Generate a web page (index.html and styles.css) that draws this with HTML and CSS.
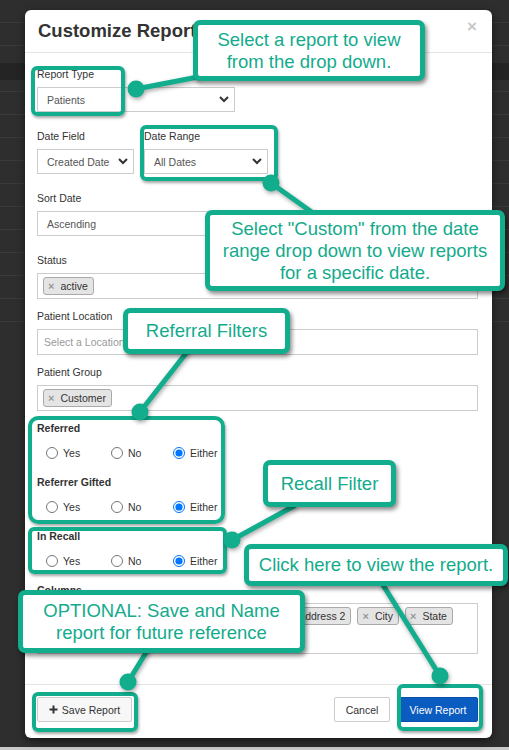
FILE: index.html
```html
<!DOCTYPE html>
<html lang="en">
<head>
<meta charset="utf-8">
<title>Customize Report</title>
<link rel="stylesheet" href="styles.css">
</head>
<body>
<div class="modal">
  <div class="modal-header">
    <h4 class="modal-title">Customize Report</h4>
    <span class="close">&times;</span>
  </div>
  <div class="modal-body">
    <div class="group g1">
      <label class="label">Report Type</label>
      <div class="select w-report"><span>Patients</span><svg class="chev" width="10" height="7" viewBox="0 0 10 7"><polyline points="1,1 5,5 9,1"/></svg></div>
    </div>
    <div class="row g1">
      <div class="group">
        <label class="label">Date Field</label>
        <div class="select w-field"><span>Created Date</span><svg class="chev" width="10" height="7" viewBox="0 0 10 7"><polyline points="1,1 5,5 9,1"/></svg></div>
      </div>
      <div class="group">
        <label class="label">Date Range</label>
        <div class="select w-range"><span>All Dates</span><svg class="chev" width="10" height="7" viewBox="0 0 10 7"><polyline points="1,1 5,5 9,1"/></svg></div>
      </div>
    </div>
    <div class="group g1">
      <label class="label">Sort Date</label>
      <div class="select"><span>Ascending</span><svg class="chev" width="10" height="7" viewBox="0 0 10 7"><polyline points="1,1 5,5 9,1"/></svg></div>
    </div>
    <div class="group g2">
      <label class="label">Status</label>
      <div class="tagbox"><span class="tag"><b class="x">&times;</b>active</span></div>
    </div>
    <div class="group g2">
      <label class="label">Patient Location</label>
      <div class="input placeholder">Select a Location</div>
    </div>
    <div class="group g2">
      <label class="label">Patient Group</label>
      <div class="tagbox"><span class="tag"><b class="x">&times;</b>Customer</span></div>
    </div>
    <div class="rgroup">
      <div class="rlabel">Referred</div>
      <div class="radios">
        <label class="radio r1"><input type="radio" name="ref">Yes</label>
        <label class="radio r2"><input type="radio" name="ref">No</label>
        <label class="radio"><input type="radio" name="ref" checked>Either</label>
      </div>
    </div>
    <div class="rgroup">
      <div class="rlabel">Referrer Gifted</div>
      <div class="radios">
        <label class="radio r1"><input type="radio" name="gift">Yes</label>
        <label class="radio r2"><input type="radio" name="gift">No</label>
        <label class="radio"><input type="radio" name="gift" checked>Either</label>
      </div>
    </div>
    <div class="rgroup">
      <div class="rlabel">In Recall</div>
      <div class="radios">
        <label class="radio r1"><input type="radio" name="recall">Yes</label>
        <label class="radio r2"><input type="radio" name="recall">No</label>
        <label class="radio"><input type="radio" name="recall" checked>Either</label>
      </div>
    </div>
    <div class="group">
      <label class="label rlabel">Columns</label>
      <div class="tagbox cols">
        <span class="tag"><b class="x">&times;</b>First Name</span>
        <span class="tag"><b class="x">&times;</b>Last Name</span>
        <span class="tag"><b class="x">&times;</b>Address 1</span>
        <span class="tag"><b class="x">&times;</b>Address 2</span>
        <span class="tag"><b class="x">&times;</b>City</span>
        <span class="tag"><b class="x">&times;</b>State</span>
      </div>
    </div>
  </div>
  <div class="modal-footer">
    <button class="btn btn-save"><svg class="plus" width="9" height="9" viewBox="0 0 9 9"><path d="M4.5 0.5v8M0.5 4.5h8"/></svg>Save Report</button>
    <div class="right-btns">
      <button class="btn btn-cancel">Cancel</button>
      <button class="btn btn-primary">View Report</button>
    </div>
  </div>
</div>

<div class="overlay">
  <div class="hl hl-type"></div>
  <div class="hl hl-range"></div>
  <div class="hl hl-referral"></div>
  <div class="hl hl-recall"></div>
  <div class="hl hl-save"></div>
  <div class="hl hl-view"></div>
  <svg class="connectors" width="509" height="750" viewBox="0 0 509 750">
    <g class="lines">
      <line x1="136" y1="89" x2="198" y2="77"/>
      <line x1="271" y1="183" x2="313" y2="213"/>
      <line x1="187" y1="352" x2="140" y2="412"/>
      <line x1="232" y1="540" x2="294" y2="506"/>
      <line x1="383" y1="585" x2="440" y2="676"/>
      <line x1="147" y1="651" x2="128" y2="682"/>
    </g>
    <g class="dots">
      <circle cx="136" cy="89" r="8.5"/>
      <circle cx="271" cy="183" r="8.5"/>
      <circle cx="140" cy="412" r="8.5"/>
      <circle cx="232" cy="540" r="8.5"/>
      <circle cx="440" cy="676" r="8.5"/>
      <circle cx="128" cy="682" r="8.5"/>
    </g>
  </svg>
  <div class="callout c1">Select a report to view<br>from the drop down.</div>
  <div class="callout c2">Select "Custom" from the date<br>range drop down to view reports<br>for a specific date.</div>
  <div class="callout c3">Referral Filters</div>
  <div class="callout c4">Recall Filter</div>
  <div class="callout c5">Click here to view the report.</div>
  <div class="callout c6">OPTIONAL: Save and Name<br>report for future reference</div>
</div>
</body>
</html>
```
FILE: styles.css
```css
* { box-sizing: border-box; }

html, body {
  margin: 0;
  height: 750px;
}

body {
  position: relative;
  overflow: hidden;
  font-family: "Liberation Sans", Arial, sans-serif;
  font-size: 10.5px;
  color: #333;
  background:
    linear-gradient(#c9c9c9, #c9c9c9) 0 747px / 100% 3px no-repeat,
    linear-gradient(#242424, #242424) 0 63px / 100% 17px no-repeat,
    repeating-linear-gradient(to bottom, transparent 0 22px, #3a3a3a 22px 23px) 0 0 / 100% 330px no-repeat,
    #2e2e2e;
}

/* ---------- modal ---------- */
.modal {
  margin: 10px 0 0 25px;
  width: 467px;
  background: #fff;
  border-radius: 6px;
  box-shadow: 0 3px 9px rgba(0, 0, 0, 0.5);
}

.modal-header {
  height: 43px;
  border-bottom: 1px solid #e5e5e5;
  display: flex;
  justify-content: space-between;
  align-items: center;
  padding: 0 15px 0 13px;
}

.modal-title {
  margin: 0;
  font-size: 18.5px;
  font-weight: bold;
  color: #333;
  line-height: 1;
}

.close {
  align-self: flex-start;
  margin-top: 8px;
  font-size: 17px;
  line-height: 17px;
  font-weight: bold;
  color: #c8c8c8;
}

.modal-body {
  padding: 14px 14px 30px 12px;
}

.label {
  display: block;
  line-height: 14px;
  margin-bottom: 6px;
}

.g1 { margin-bottom: 17px; }
.g2 { margin-bottom: 10px; }

.row {
  display: flex;
  gap: 10px;
}

.select {
  height: 25px;
  border: 1px solid #ccc;
  display: flex;
  align-items: center;
  justify-content: space-between;
  padding: 0 5px 0 9px;
  color: #555;
}

.w-report { width: 198px; }
.w-field { width: 97px; }
.w-range { width: 124px; }

.chev polyline {
  fill: none;
  stroke: #333;
  stroke-width: 2;
}

.input {
  height: 26px;
  border: 1px solid #ccc;
  display: flex;
  align-items: center;
  padding: 0 6px;
}

.placeholder { color: #999; }

.tagbox {
  min-height: 26px;
  border: 1px solid #ccc;
  padding: 3px 5px;
  display: flex;
  flex-wrap: wrap;
  align-content: flex-start;
  gap: 4px 6px;
}

.tagbox.cols {
  height: 51px;
}

.tag {
  height: 18px;
  border: 1px solid #aaa;
  border-radius: 3px;
  background: #e4e4e4;
  display: inline-flex;
  align-items: center;
  gap: 6px;
  padding: 0 5px 0 4px;
  color: #333;
  white-space: nowrap;
}

.tag .x {
  color: #999;
  font-size: 11px;
  font-weight: bold;
}

/* ---------- radios ---------- */
.rgroup { margin-bottom: 13px; }

.rlabel {
  font-weight: bold;
  line-height: 14px;
}

.radios {
  display: flex;
  align-items: center;
  height: 18px;
  margin-top: 9px;
  padding-left: 9px;
}

.radio {
  display: flex;
  align-items: center;
  gap: 5px;
}

.radio input {
  width: 12px;
  height: 12px;
  margin: 0;
}

.r1 { width: 65px; }
.r2 { width: 62px; }

/* ---------- footer ---------- */
.modal-footer {
  border-top: 1px solid #e5e5e5;
  padding: 12px 14px 16px 12px;
  display: flex;
  justify-content: space-between;
}

.right-btns {
  display: flex;
  gap: 8px;
}

.btn {
  height: 25px;
  border: 1px solid #ccc;
  border-radius: 2px;
  background: #fff;
  display: flex;
  align-items: center;
  justify-content: center;
  font-family: "Liberation Sans", Arial, sans-serif;
  font-size: 10.5px;
  color: #333;
  padding: 0;
}

.btn-save {
  width: 95px;
  background: #f7f7f7;
  gap: 4px;
}

.plus path {
  stroke: #333;
  stroke-width: 2;
}

.btn-cancel { width: 56px; }

.btn-primary {
  width: 80px;
  background: #0b5cc0;
  border-color: #0a50a8;
  color: #fff;
}

/* ---------- annotation overlay ---------- */
.overlay {
  position: absolute;
  inset: 0;
  pointer-events: none;
}

.hl {
  position: absolute;
  border: 4px solid #11ad8d;
  border-radius: 6px;
  box-shadow: 1px 2px 3px rgba(0, 0, 0, 0.35);
}

.hl-type { left: 31px; top: 66px; width: 94px; height: 50px; }
.hl-range { left: 140px; top: 125px; width: 138px; height: 56px; }
.hl-referral { left: 28px; top: 416px; width: 197px; height: 108px; border-radius: 10px; }
.hl-recall { left: 28px; top: 527px; width: 199px; height: 47px; }
.hl-save { left: 32px; top: 692px; width: 106px; height: 40px; }
.hl-view { left: 397px; top: 684px; width: 86px; height: 47px; }

.connectors {
  position: absolute;
  left: 0;
  top: 0;
  filter: drop-shadow(1px 2px 2px rgba(0, 0, 0, 0.35));
}

.lines line {
  stroke: #11ad8d;
  stroke-width: 5;
  stroke-linecap: round;
}

.dots circle { fill: #11ad8d; }

.callout {
  position: absolute;
  background: #fff;
  border: 5px solid #11ad8d;
  border-radius: 7px;
  color: #13ab8c;
  font-family: "Liberation Sans", Arial, sans-serif;
  font-size: 18.5px;
  line-height: 22px;
  text-align: center;
  display: flex;
  align-items: center;
  justify-content: center;
  white-space: nowrap;
  box-shadow: 2px 3px 4px rgba(0, 0, 0, 0.45);
}

.c1 { left: 193px; top: 20px; width: 232px; height: 61px; }
.c2 { left: 205px; top: 210px; width: 300px; height: 81px; }
.c3 { left: 123px; top: 308px; width: 167px; height: 46px; }
.c4 { left: 263px; top: 460px; width: 133px; height: 47px; }
.c5 { left: 244px; top: 544px; width: 264px; height: 42px; }
.c6 { left: 18px; top: 590px; width: 287px; height: 63px; }
```
